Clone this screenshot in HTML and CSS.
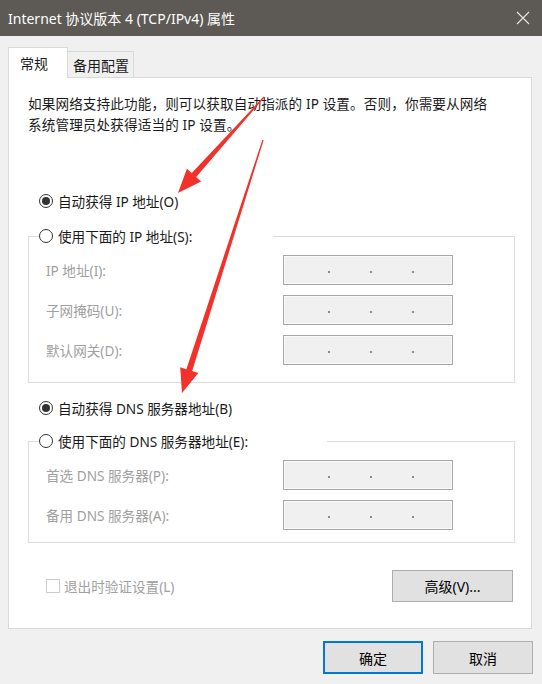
FILE: index.html
```html
<!DOCTYPE html>
<html lang="zh-CN">
<head>
<meta charset="utf-8">
<title>Internet 协议版本 4 (TCP/IPv4) 属性</title>
<link rel="stylesheet" href="styles.css">
</head>
<body>
<div class="titlebar">
  <span class="title">Internet 协议版本 4 (TCP/IPv4) 属性</span>
  <svg class="close" viewBox="0 0 14 14" width="14" height="14"><path d="M1 1L13 13M13 1L1 13" stroke="#e8e8e8" stroke-width="1.1" fill="none"/></svg>
</div>
<div class="content">
  <div class="tabs">
    <div class="tab active">常规</div>
    <div class="tab other">备用配置</div>
  </div>
  <div class="panel">
    <p class="desc">如果网络支持此功能，则可以获取自动指派的 IP 设置。否则，你需要从网络<br>系统管理员处获得适当的 IP 设置。</p>
    <div class="radio-row first"><span class="radio checked"></span><span>自动获得 IP 地址(O)</span></div>
    <fieldset class="group g1">
      <legend class="legend"><span class="radio"></span><span>使用下面的 IP 地址(S):</span></legend>
      <div class="field"><span class="label">IP 地址(I):</span><span class="ipbox"><i></i><i></i><i></i></span></div>
      <div class="field"><span class="label">子网掩码(U):</span><span class="ipbox"><i></i><i></i><i></i></span></div>
      <div class="field"><span class="label">默认网关(D):</span><span class="ipbox"><i></i><i></i><i></i></span></div>
    </fieldset>
    <div class="radio-row dns"><span class="radio checked"></span><span>自动获得 DNS 服务器地址(B)</span></div>
    <fieldset class="group g2">
      <legend class="legend"><span class="radio"></span><span>使用下面的 DNS 服务器地址(E):</span></legend>
      <div class="field"><span class="label">首选 DNS 服务器(P):</span><span class="ipbox"><i></i><i></i><i></i></span></div>
      <div class="field"><span class="label">备用 DNS 服务器(A):</span><span class="ipbox"><i></i><i></i><i></i></span></div>
    </fieldset>
    <div class="footer-row">
      <div class="check"><span class="box"></span><span>退出时验证设置(L)</span></div>
      <div class="btn adv">高级(V)...</div>
    </div>
  </div>
  <div class="actions">
    <div class="btn primary">确定</div>
    <div class="btn">取消</div>
  </div>
</div>
<svg class="arrows" width="542" height="684" viewBox="0 0 542 684">
  <polygon fill="#f2312b" points="263.6,96.6 191.8,173.1 186.9,168.8 178,193 201.1,181.4 196.2,177.1 264.4,97.4"/>
  <polygon fill="#f2312b" points="262.4,139.8 186.4,369.2 180.2,367.2 182,393 198.4,373.0 192.2,371.0 263.6,140.2"/>
</svg>
</body>
</html>
```

FILE: styles.css
```css
* { box-sizing: border-box; }
html, body { margin: 0; padding: 0; }
body {
  width: 542px;
  height: 684px;
  overflow: hidden;
  position: relative;
  background: #f0f0f0;
  font-family: "Noto Sans", "Noto Sans CJK SC", sans-serif;
  font-size: 13.6px;
  color: #1a1a1a;
}
.titlebar {
  height: 36px;
  background: #5d5955;
  color: #ffffff;
  display: flex;
  align-items: center;
  justify-content: space-between;
  padding: 0 12px 0 8px;
  font-size: 14px;
}
.close { display: block; }
.content { padding: 11px 10px 0 8px; }
.tabs { display: flex; align-items: flex-end; height: 31px; font-size: 14px; }
.tab { border: 1px solid #d9d9d9; border-bottom: none; }
.tab.active {
  background: #fff;
  width: 60px;
  height: 31px;
  line-height: 31px;
  padding: 0 0 0 11px;
  position: relative;
  z-index: 1;
}
.tab.other {
  border-left: none;
  width: 66px;
  height: 27px;
  line-height: 28px;
  padding: 0 0 0 5px;
}
.panel {
  background: #fff;
  border: 1px solid #d9d9d9;
  margin-top: -1px;
  height: 552px;
  padding: 15px 16px 0 19px;
}
.desc { margin: 0; line-height: 21px; letter-spacing: 0.12px; }
.radio-row {
  display: flex;
  align-items: center;
  height: 20px;
  padding-left: 11px;
  gap: 5px;
}
.radio-row.first { margin-top: 56px; }
.radio-row.dns { margin-top: 15px; }
.radio {
  width: 14px;
  height: 14px;
  border: 1px solid #333;
  border-radius: 50%;
  background: #fff;
  display: flex;
  align-items: center;
  justify-content: center;
  flex: none;
}
.radio.checked::after {
  content: "";
  width: 8px;
  height: 8px;
  border-radius: 50%;
  background: #333;
}
.group {
  margin: 15px 0 0 0;
  border: 1px solid #dcdcdc;
  padding: 9px 0 17px 17px;
  min-width: 0;
}
.group.g2 { margin-top: 13px; padding-bottom: 12px; }
.legend {
  padding: 0;
  margin-left: -7px;
  display: flex;
  align-items: center;
  gap: 5px;
  height: 20px;
}
.g1 .legend { width: 234px; }
.g2 .legend { width: 288px; }
.field {
  display: grid;
  grid-template-columns: 237px 170px;
  align-items: center;
  height: 30px;
}
.field + .field { margin-top: 10px; }
.label { color: #a0a0a0; }
.ipbox {
  height: 30px;
  background: #f0f0f0;
  border: 1px solid #a6a6a6;
  box-shadow: inset 0 0 0 1px #fbfbfb;
  display: flex;
  align-items: center;
  justify-content: center;
  gap: 40px;
  padding: 3px 0 0 6px;
}
.ipbox i {
  width: 2px;
  height: 2px;
  background: #8a8a8a;
  display: block;
}
.footer-row {
  display: flex;
  align-items: center;
  justify-content: space-between;
  margin-top: 27px;
  padding: 0 2px 0 18px;
}
.check { display: flex; align-items: center; gap: 4px; color: #a0a0a0; }
.check .box {
  width: 14px;
  height: 14px;
  border: 1px solid #cccccc;
  background: #fff;
}
.btn {
  background: #e1e1e1;
  border: 1px solid #adadad;
  display: flex;
  align-items: center;
  justify-content: center;
  color: #000;
  font-size: 14px;
}
.btn.adv { width: 121px; height: 32px; }
.actions {
  display: flex;
  justify-content: flex-end;
  gap: 10px;
  padding-top: 12px;
  margin-right: -1px;
}
.actions .btn { width: 100px; height: 33px; }
.btn.primary { border: 2px solid #0078d7; }
.arrows { position: absolute; left: 0; top: 0; pointer-events: none; }
```
